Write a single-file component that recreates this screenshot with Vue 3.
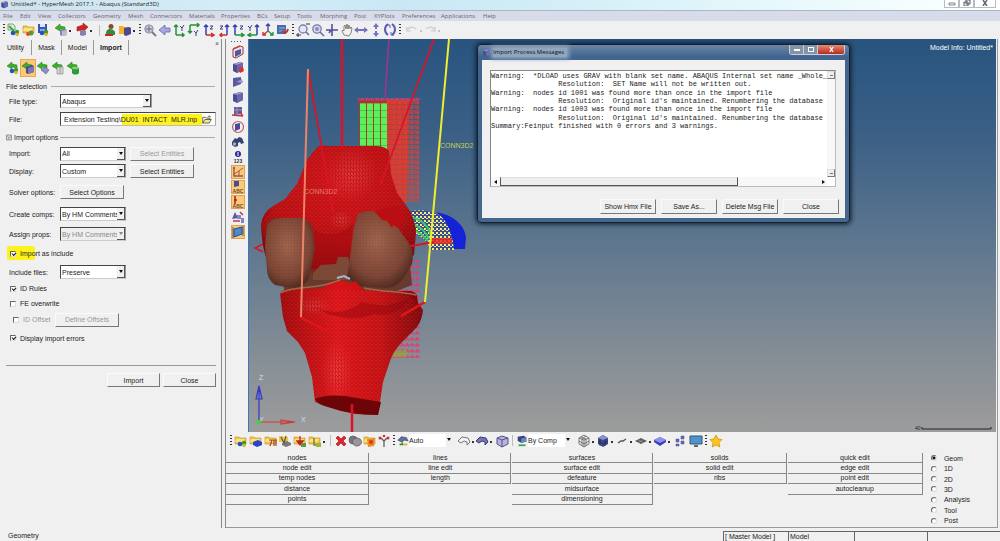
<script setup>
import { ref } from 'vue'

const menus = [
  ['File', 17], ['Edit', 18], ['View', 20], ['Collectors', 35], ['Geometry', 35], ['Mesh', 22],
  ['Connectors', 39], ['Materials', 32], ['Properties', 36], ['BCs', 17], ['Setup', 23], ['Tools', 23],
  ['Morphing', 34], ['Post', 20], ['XYPlots', 28], ['Preferences', 39], ['Applications', 42], ['Help', 20],
]

const folder = '<path d="M1 3h4l1 1h6v6H1z" fill="#f3c544" stroke="#c8922a" stroke-width=".6"/><path d="M2 5h9l-2 3H1z" fill="#fbe08a"/>'
const cube = '<path d="M2 4l7-2 3 1v7l-6 3-4-2z" fill="#4c4a90"/><path d="M2 4l7-2 3 1-6 2z" fill="#9a98cc"/><path d="M6 5l6-2v7l-6 3z" fill="#6a69ad"/>'
const arrowL = '<path d="M1 5l5-4v2l5 1v3L6 6v2z" fill="#3cae2c" stroke="#1e7d17" stroke-width=".5"/>'
const dots3 = '<circle cx="6" cy="10" r="2.3" fill="#2352c4"/><circle cx="10" cy="9" r="2.2" fill="#3b9a2e"/><circle cx="10" cy="11.500" r="1.700" fill="#d9b321"/>'
const axis = (d) => `<g fill="none" stroke="#24943c" stroke-width="1.500"><path d="${d}"/></g>`
const icons = {
  newModel: '<path d="M1 1h5l2 2v4H1z" fill="#dfe9f4" stroke="#5a9a48" stroke-width=".8"/><path d="M2 3l5 5" stroke="#3cae2c" stroke-width="2"/>' + dots3,
  open: folder + '<circle cx="9" cy="10" r="2.500" fill="#4aa13a"/><circle cx="6" cy="11" r="2" fill="#d84b2b"/>',
  save: '<path d="M2 1h9v9H2z" fill="#3b55b5"/><path d="M4 1h5v3H4z" fill="#dce4f6"/><path d="M4 6h5v4H4z" fill="#8ea5df"/>' + dots3,
  imp: arrowL + '<path d="M6 7l5-1 2 1v5l-5 1-2-1z" fill="#8583ae"/><path d="M8 8l5-1v5l-5 1z" fill="#bdbcc9"/>',
  exp: '<path d="M13 4L8 0v2L2 4v4l6-1v2z" fill="#cf2424" stroke="#8a1010" stroke-width=".5"/><path d="M5 8l4-1 2 1v4l-4 1-2-1z" fill="#8583ae"/>',
  user: '<circle cx="8" cy="3.500" r="2.500" fill="#8c4a28"/><path d="M3 11c0-4 2-5 4-5s4 1 5 3v3z" fill="#2f8c3d"/><path d="M2 11h8v2H2z" fill="#c12f24"/>',
  book: '<path d="M1 3h4l1 1h6v7H1z" fill="#f3b12c"/><path d="M6 5l5-1 2 1v6l-5 2-2-1z" fill="#4b4990"/>',
  mag: '<circle cx="6" cy="6" r="4" fill="#c7ccd9" stroke="#8a8da0" stroke-width="1.200"/><path d="M9 9l4 4" stroke="#777a8c" stroke-width="2"/><path d="M6 3v6M3 6h6" stroke="#686b84"/>',
  back: '<path d="M1 7l6-5v3h5v4H7v3z" fill="#a6a7dc" stroke="#6668a8" stroke-width=".8"/>',
  ax1: axis('M3 12V2M1 4l2-2 2 2M3 12h8M9 10l2 2-2 2') + '<path d="M7 3l2 2 2-3M9 5v3" stroke="#33408c" fill="none"/>',
  ax2: axis('M3 2h9M10 0l2 2-2 2M3 2v8M1 8l2 2 2-2') + '<path d="M7 8l2 2 2-3M9 10v3" stroke="#33408c" fill="none"/>',
  ax3: '<path d="M4 12V2M2 4l2-2 2 2" fill="none" stroke="#3340b0" stroke-width="1.500"/><path d="M4 12h7M9 10l3 2-3 2" fill="none" stroke="#cc2c2c" stroke-width="1.500"/><path d="M8 3h3L8 6h3" stroke="#33408c" fill="none"/>',
  ax4: '<path d="M10 12V2M8 4l2-2 2 2" fill="none" stroke="#3340b0" stroke-width="1.500"/><path d="M10 12H3M5 10l-2 2 2 2" fill="none" stroke="#cc2c2c" stroke-width="1.500"/><path d="M3 3h3L3 6h3" stroke="#33408c" fill="none"/>',
  ax5: '<path d="M3 12V2M1 4l2-2 2 2" fill="none" stroke="#3340b0" stroke-width="1.500"/><path d="M3 12h8M9 10l3 2-3 2" fill="none" stroke="#24943c" stroke-width="1.500"/><path d="M8 3h3L8 6h3" stroke="#33408c" fill="none"/>',
  ax6: '<path d="M11 12V2M9 4l2-2 2 2" fill="none" stroke="#3340b0" stroke-width="1.500"/><path d="M11 12H3M5 10l-3 2 3 2" fill="none" stroke="#24943c" stroke-width="1.500"/><path d="M2 3l2 2 2-3M4 5v3" stroke="#33408c" fill="none"/>',
  iso: '<path d="M7 8V1M5 3l2-2 2 2" fill="none" stroke="#3340b0" stroke-width="1.300"/><path d="M7 8l-5 4M2 9v3h3" fill="none" stroke="#cc2c2c" stroke-width="1.300"/><path d="M7 8l5 4M12 9v3H9" fill="none" stroke="#24943c" stroke-width="1.300"/>',
  pick: '<path d="M1 2h9v9H1z" fill="#3f6fb2"/><path d="M3 5h6M3 8h5" stroke="#90b6e2"/><path d="M6 8c3 3 5 2 6-2" stroke="#d02a2a" stroke-width="2" fill="none"/>',
  zoomA: '<circle cx="7" cy="6" r="4" fill="#e3e6f5" stroke="#7a7cb2" stroke-width="1.300"/><path d="M10 9l3 3" stroke="#6a6c9c" stroke-width="1.600"/><path d="M0 12h5M10 1h4M2 10v4" stroke="#333"/>',
  zoomB: '<circle cx="6" cy="6" r="4.200" fill="#d4d8ec" stroke="#7a7cb2" stroke-width="1.300"/><circle cx="6" cy="6" r="2" fill="#8c90bd"/><path d="M9 9l4 4" stroke="#6a6c9c" stroke-width="1.600"/>',
  cross: '<path d="M7 1v12M1 7h12M4 10l2-3" stroke="#50529b" stroke-width="1.600" fill="none"/>',
  hand: '<path d="M4 12L2 8l1-1 1 1V3l1-1 1 4 1-5 1 5 1-4 1 4 1-2 1 1-1 5-2 3z" fill="#f5f2ec" stroke="#6c6866" stroke-width=".8"/>',
  lr: '<path d="M0 7l4-3v2h6V4l4 3-4 3V8H4v2z" fill="#7173bf"/>',
  ud: '<path d="M7 0l3 4H8v2H6V4H4zM7 14l3-4H8V8H6v2H4z" fill="#7173bf"/>',
  rot: '<path d="M5 1c-4 3-4 8 0 11M9 1c4 3 4 8 0 11" fill="none" stroke="#5b5db3" stroke-width="2"/><path d="M3 2h4v3M11 12H8V9" fill="none" stroke="#5b5db3"/>',
  undo: '<path d="M2 8c1-4 6-5 9-2M2 4v4h4" fill="none" stroke="#d3d3d6" stroke-width="1.600"/>',
  redo: '<path d="M12 8c-1-4-6-5-9-2M12 4v4H8" fill="none" stroke="#d3d3d6" stroke-width="1.600"/>',
  impModel: arrowL + dots3,
  impSolver: arrowL + '<path d="M5 6l6-2 2 1v6l-6 2-2-1z" fill="#4b4990"/><path d="M7 7l6-2v6l-6 2z" fill="#7a78b0"/>',
  impGeo: arrowL + '<path d="M5 9l4-3 4 3-3 4z" fill="#8f8fc4" stroke="#5d5d90" stroke-width=".6"/>',
  impSim: arrowL + '<path d="M6 6h6v7H6z" fill="#d5d5d5" stroke="#8c8c8c" stroke-width=".7"/><path d="M9 6v7" stroke="#9a9a9a"/>',
  impDb: arrowL + '<path d="M6 7v5c1 2 6 2 7 0V7z" fill="#2c9c35"/><ellipse cx="9.500" cy="7" rx="3.500" ry="1.300" fill="#7ed26c"/>',
  book2: '<path d="M2 4l7-3 3 1v7l-7 4-3-1z" fill="#e9e6ee" stroke="#9a3a3a" stroke-width="1"/><path d="M4 6l6-2v5l-6 3z" fill="#5755a0"/><path d="M2 4l7-3" stroke="#c54343" stroke-width="1.500"/>',
  cubeRed: cube + '<path d="M7 8l5-1 1 4-4 2z" fill="#d93131"/>',
  cubeFlag: '<path d="M2 3l8-1v7l-8 3z" fill="#5b5a9c"/><path d="M5 7l6-3 1 4z" fill="#9896cd"/>',
  cube,
  cubeLine: '<path d="M3 2l8 0v7l-8 1z" fill="#605ea2"/><path d="M1 10l11 1M8 6l4 5" stroke="#c52f3f" stroke-width="1.300"/><path d="M3 5h8M6 2v8" stroke="#b3a6ce" stroke-width=".7"/>',
  cubeCirc: '<path d="M4 4l5-1v6l-5 2z" fill="#4c4a90"/><circle cx="7" cy="7" r="5.500" fill="none" stroke="#b95c6c" stroke-width="1.200"/>',
  binoc: '<path d="M1 7l3-4 2 1 2-2 3 1 2 5-3 1-1-2-2 1v3l-3 1-3-2z" fill="#35446f"/><circle cx="3.500" cy="9" r="1.700" fill="#9aaad2"/>',
  info: '<circle cx="7" cy="4" r="3" fill="#27299c"/><path d="M7 2v4" stroke="#fff"/><text x="7" y="13" font-size="5" font-weight="700" text-anchor="middle" fill="#333" font-family="Liberation Sans, sans-serif">123</text>',
  ang: '<path d="M3 3v8h9" fill="none" stroke="#8d5b3a" stroke-width="1.300"/><path d="M2 10L12 3M8 6v5" stroke="#a4555b"/><circle cx="3" cy="3" r="1.200" fill="#706d91"/>',
  abc1: '<path d="M3 1l5 0v5l-5 1z" fill="#4c4a90"/><text x="7" y="13" font-size="5" font-weight="700" text-anchor="middle" fill="#704a2c" font-family="Liberation Sans, sans-serif">ABC</text>',
  abc2: '<path d="M4 1v8M3 5h3" stroke="#b51d1d" stroke-width="1.500"/><text x="7" y="13" font-size="5" font-weight="700" text-anchor="middle" fill="#704a2c" font-family="Liberation Sans, sans-serif">ABC</text>',
  shapes: '<path d="M1 9l3-7 3 6z" fill="#5957a3"/><path d="M6 5h4v4H6zM10 8h3v5h-3z" fill="#8684c0"/><path d="M2 11h7M9 2l3 3" stroke="#b53d49" stroke-width="1.500"/>',
  frame: '<path d="M3 4l8-2v7l-8 3z" fill="#4a8ad0" stroke="#2a4a86"/><path d="M2 2v11M12 1v10" stroke="#456"/>',
  fCol: folder + dots3,
  fComp: folder + '<path d="M4 8l5-2 4 2v3l-5 2-4-2z" fill="#2a45c8"/>',
  fMat: folder + '<path d="M5 6h8M6 12l2-6M10 12V6M12 12V6" stroke="#9b4a2b" stroke-width="1.200"/>',
  fProp: '<path d="M1 2h4l1 1h4v5H1z" fill="#f3c544"/><path d="M4 9l5-2 4 2v2l-5 2-4-2z" fill="#77777d"/><path d="M3 3l3 6M8 2L6 9" stroke="#555" stroke-width="1.200"/>',
  fLoad: folder + '<path d="M7 2v8M4 7l3 4 3-4z" stroke="#c22020" fill="#c22020" stroke-width="1.300"/><path d="M8 9h5v4H8z" fill="#5b9d37"/>',
  fSys: folder + '<path d="M6 4v7h6" stroke="#6c8c28" stroke-width="1.500" fill="none"/><path d="M8 9h5v4H8z" fill="#9ab548"/>',
  del: '<path d="M2 4l2-2 3 3 3-3 2 2-3 3 3 3-2 2-3-3-3 3-2-2 3-3z" fill="#e0262c" stroke="#a50e14" stroke-width=".6"/>',
  spheres: '<ellipse cx="5" cy="6" rx="4" ry="4" fill="#77777c" stroke="#55555a" stroke-width=".7"/><ellipse cx="9" cy="8" rx="4.500" ry="4" fill="#96969b" stroke="#55555a" stroke-width=".7"/>',
  orange: folder + '<path d="M4 5l8-1-1 8-6 1z" fill="#ef8a23"/><circle cx="8" cy="8" r="2" fill="#c5421b"/>',
  qmarks: '<path d="M7 13V7L4 4M7 7l3-3" stroke="#555" fill="none" stroke-width="1.200"/><circle cx="3" cy="4" r="1.500" fill="#cf3434"/><circle cx="11" cy="4" r="1.500" fill="#cf3434"/><circle cx="7" cy="2" r="1.300" fill="#cf3434"/>',
  surfA: '<path d="M1 6l4-4 6 1 2 4-4-1-4 2z" fill="#5e6f9d" stroke="#2d3a60" stroke-width=".6"/><path d="M3 11h4" stroke="#3c8c34" stroke-width="2"/><path d="M7 11h5" stroke="#d3b431" stroke-width="2"/><path d="M6 7v4" stroke="#444"/>',
  surfB: '<path d="M1 7l4-4 6 1 2 4-3 3 0-3-3-1-3 2z" fill="#f4f4f7" stroke="#73757f" stroke-width="1"/>',
  surfC: '<path d="M1 7l4-4 6 1 2 4-3 3 0-3-3-1-3 2z" fill="#7574bb" stroke="#3a3a6c" stroke-width="1"/>',
  box: '<path d="M2 4l5-2 6 2v6l-6 3-5-3z" fill="#b5b4da" stroke="#555390"/><path d="M2 4l5 2 6-2M7 6v7" fill="none" stroke="#555390"/>',
  compBox: '<path d="M2 2l7-1 3 2v5L6 9 2 7z" fill="#31457a"/><path d="M6 4l6-1v5L6 9z" fill="#6a83c2"/><path d="M3 11h8v2H3z" fill="#34a04c"/>',
  wire: '<path d="M2 4l5-3 5 3v6l-5 3-5-3zM2 4l5 2 5-2M7 6v7M2 7l5 3 5-3M4 3l5 2v7M9 2L5 5v7" fill="none" stroke="#5a5a60" stroke-width=".8"/>',
  solid: '<path d="M2 4l5-3 5 3v6l-5 3-5-3z" fill="#3e4887"/><path d="M2 4l5-3 5 3-5 2z" fill="#8791cc"/><path d="M2 7l5 3 5-3M4 5v7M9 5v7" stroke="#222a5a" stroke-width=".7" fill="none"/>',
  line: '<path d="M3 9l3-2 2 0 3-2" stroke="#555" stroke-width="1.500" fill="none"/>',
  plate: '<path d="M1 7l6-3 6 3-6 3z" fill="#555a55"/><path d="M4 6l6 3M10 5L4 9" stroke="#a6aba6" stroke-width=".6"/>',
  block: '<path d="M1 6l6-3 6 3v2l-6 4-6-4z" fill="#3640b8"/><path d="M1 6l6-3 6 3-6 3z" fill="#8c93ee"/>',
  tiles: '<path d="M3 5h3v3H3zM8 2h3v3H8zM3 10h3v2H3zM8 7h3v3H8z" fill="#6a6cb0" stroke="#4a4c90" stroke-width=".5"/>',
  monitor: '<path d="M1 2h12v8H1z" fill="#4b94cf" stroke="#3a5570"/><path d="M5 12h4" stroke="#666" stroke-width="2"/>',
  star: '<path d="M7 1l2 4 4 .5-3 3 .8 4.500L7 11l-3.800 2L4 8.500l-3-3L5 5z" fill="#f9c51d" stroke="#d0940e" stroke-width=".8"/>',
}

const topBar = [
  { handle: true },
  { w: 43, items: ['newModel', 'open', 'save'] },
  { w: 46, items: ['imp', 'exp'], drop: true },
  { sep: true },
  { w: 14, items: ['user'] },
  { w: 20, items: ['book'], drop: true },
  { handle: true },
  { w: 147, items: ['mag', 'back', 'ax1', 'ax2', 'ax3', 'ax4', 'ax5', 'ax6', 'iso', 'pick'] },
  { handle: true },
  { w: 101, items: ['zoomA', 'zoomB', 'cross', 'hand', 'lr', 'ud', 'rot'] },
  { handle: true },
  { w: 40, items: ['undo', 'redo'], drop: true, dim: true },
]
const leftTools = ['book2', 'cubeRed', 'cubeFlag', 'cube', 'cubeLine', 'cubeCirc', 'binoc', 'info', 'ang', 'abc1', 'abc2', 'shapes', 'frame']
const activeTools = ['ang', 'abc1', 'abc2', 'frame']
const importKinds = ['impModel', 'impSolver', 'impGeo', 'impSim', 'impDb']
const bottomBar = [
  { handle: true },
  { w: 73, items: ['fCol', 'fComp', 'fMat', 'fProp', 'fLoad'] },
  { w: 20, items: ['fSys'], drop: true },
  { sep: true },
  { w: 57, items: ['del', 'spheres', 'orange', 'qmarks'] },
  { handle: true },
  { select: 'Auto', icon: 'surfA' },
  { w: 40, items: ['surfB', 'surfC'], drop: true },
  { w: 14, items: ['box'] },
  { sep: true },
  { select: 'By Comp', icon: 'compBox' },
  { w: 99, items: ['wire', 'solid', 'line', 'plate', 'block'], drop: true },
  { w: 30, items: ['tiles', 'monitor'] },
  { handle: true },
  { w: 14, items: ['star'] },
]
const columns = [
  ['nodes', 'node edit', 'temp nodes', 'distance', 'points'],
  ['lines', 'line edit', 'length'],
  ['surfaces', 'surface edit', 'defeature', 'midsurface', 'dimensioning'],
  ['solids', 'solid edit', 'ribs'],
  ['quick edit', 'edge edit', 'point edit', 'autocleanup'],
]
const pages = ['Geom', '1D', '2D', '3D', 'Analysis', 'Tool', 'Post']
const page = ref('Geom')
const filePath = ref('Extension Testing\\DU01_INTACT_MLR.inp')
const asInclude = ref(true)
const idRules = ref(true)
const feOverwrite = ref(false)
const showErrors = ref(true)
const messages = [
  'Warning:  *DLOAD uses GRAV with blank set name. ABAQUS Internal set name _Whole_',
  '                Resolution:  SET Name will not be written out.',
  'Warning:  nodes id 1001 was found more than once in the import file',
  '                Resolution:  Original id\'s maintained. Renumbering the database',
  'Warning:  nodes id 1003 was found more than once in the import file',
  '                Resolution:  Original id\'s maintained. Renumbering the database',
  'Summary:Feinput finished with 0 errors and 3 warnings.',
]
</script>

<template>
  <div class="app">
    <header class="titlebar">
      <svg class="logo" viewBox="0 0 14 14" v-html="icons.cube"></svg>
      <h1>Untitled* - HyperMesh 2017.1 - Abaqus (Standard3D)</h1>
      <div class="winbtns">
        <button aria-label="Minimize"><svg viewBox="0 0 8 6"><path d="M1 3h6v2H1z" fill="#fff" stroke="#667" stroke-width=".8" /></svg></button>
        <button aria-label="Restore"><svg viewBox="0 0 8 6"><path d="M3 0h4v4H3zM1 2h4v4H1z" fill="#fff" stroke="#556" /></svg></button>
        <button class="wide" aria-label="Close window"><svg viewBox="0 0 8 6"><path d="M2 0l4 6M6 0L2 6" stroke="#667" stroke-width="1.500" /></svg></button>
      </div>
    </header>
    <nav class="menubar">
      <button v-for="m in menus" :key="m[0]" :style="{ width: m[1] + 'px' }">{{ m[0] }}</button>
    </nav>
    <div class="toolbar top">
      <template v-for="(g, i) in topBar" :key="i">
        <span v-if="g.handle" class="handle"></span>
        <span v-else-if="g.sep" class="sep"></span>
        <div v-else class="group" :class="{ drop: g.drop, dim: g.dim }" :style="{ width: g.w + 'px' }">
          <button v-for="n in g.items" :key="n" :aria-label="n"><svg viewBox="0 0 14 14" v-html="icons[n]"></svg></button>
        </div>
      </template>
    </div>

    <div class="work">
      <aside class="panel">
        <div class="tabs">
          <button>Utility</button><button>Mask</button><button>Model</button><button class="on">Import</button>
          <button class="x" aria-label="Close panel">×</button>
        </div>
        <div class="kinds">
          <button v-for="k in importKinds" :key="k" :class="{ on: k === 'impSolver' }" :aria-label="k"><svg viewBox="0 0 14 14" v-html="icons[k]"></svg></button>
        </div>
        <h2><span>File selection</span></h2>
        <div class="row">
          <label for="ftype">File type:</label>
          <span class="sel w92"><select id="ftype"><option>Abaqus</option></select></span>
        </div>
        <div class="row">
          <label for="fpath">File:</label>
          <span class="file"><input id="fpath" v-model="filePath" type="text" />
            <button aria-label="Browse"><svg viewBox="0 0 14 12"><path d="M1 3h4l1 1h5v2M1 3v8l3-5h9l-3 5H1" fill="#f3e98a" stroke="#333" /><path d="M8 2l3-1 1 2" fill="none" stroke="#333" /></svg></button>
          </span>
        </div>
        <h2 class="opts"><svg viewBox="0 0 10 10"><path d="M1 1h8v8H1zM3 3l2 2 2-2M3 5l2 2 2-2" fill="none" stroke="#444" /></svg><span>Import options</span></h2>
        <div class="row tight">
          <label for="imp">Import:</label>
          <span class="sel w66"><select id="imp"><option>All</option></select></span>
          <button class="btn w64" disabled>Select Entities</button>
        </div>
        <div class="row">
          <label for="disp">Display:</label>
          <span class="sel w66"><select id="disp"><option>Custom</option></select></span>
          <button class="btn w64">Select Entities</button>
        </div>
        <div class="row solver"><span class="lbl">Solver options:</span><button class="btn w64">Select Options</button></div>
        <div class="row tall">
          <label for="comps">Create comps:</label>
          <span class="sel w66"><select id="comps"><option>By HM Comments</option></select></span>
        </div>
        <div class="row tall">
          <label for="props">Assign props:</label>
          <span class="sel w66 off"><select id="props" disabled><option>By HM Comments</option></select></span>
        </div>
        <label class="check mark"><input v-model="asInclude" type="checkbox" />Import as include</label>
        <div class="row">
          <label for="inc">Include files:</label>
          <span class="sel w66"><select id="inc"><option>Preserve</option></select></span>
        </div>
        <label class="check"><input v-model="idRules" type="checkbox" />ID Rules</label>
        <label class="check"><input v-model="feOverwrite" type="checkbox" />FE overwrite</label>
        <div class="offset">
          <label class="check dim"><input type="checkbox" disabled />ID Offset</label>
          <button class="btn w64" disabled>Define Offsets</button>
        </div>
        <label class="check last"><input v-model="showErrors" type="checkbox" />Display import errors</label>
        <div class="actions"><button class="btn">Import</button><button class="btn">Close</button></div>
      </aside>

      <main>
        <div class="stage">
          <div class="side">
            <button v-for="t in leftTools" :key="t" :class="{ on: activeTools.includes(t) }" :aria-label="t"><svg viewBox="0 0 14 14" v-html="icons[t]"></svg></button>
          </div>
          <div class="view">
            <svg class="scene" viewBox="249 39 747 393" preserveAspectRatio="xMinYMin meet">
              <defs>
                <pattern id="tri" width="4" height="4" patternUnits="userSpaceOnUse"><path d="M0 0h4M0 0l2 4 2-4" fill="none" stroke="#ff6a60" stroke-width=".4" opacity=".3" /></pattern>
                <pattern id="triLight" width="3" height="4" patternUnits="userSpaceOnUse"><path d="M0 0l2 4M0 2h2" fill="none" stroke="#ffb0a8" stroke-width=".6" opacity=".5" /></pattern>
                <pattern id="quad" width="3" height="3" patternUnits="userSpaceOnUse"><path d="M0 0h3M0 0v3" fill="none" stroke="#3a1a10" stroke-width=".4" opacity=".3" /></pattern>
                <pattern id="arr" width="6" height="5" patternUnits="userSpaceOnUse"><path d="M0 1h6M0 3h5M5 2L3 3l2 1" fill="none" stroke="#f23a28" stroke-width="1" /></pattern>
                <pattern id="pink" width="5" height="6" patternUnits="userSpaceOnUse"><path d="M1 5l1-4 2 4M0 3h5" fill="none" stroke="#e8386a" stroke-width=".9" /></pattern>
                <pattern id="grn" width="7" height="7" patternUnits="userSpaceOnUse" x="359" y="103"><path d="M0 0h7v7H0z" fill="#5df05d" /><path d="M0 0v7" stroke="#b5251c" stroke-width="1.800" /><path d="M0 0h7" stroke="#2b8a2b" stroke-width=".8" /></pattern>
                <pattern id="chk" width="4" height="4" patternUnits="userSpaceOnUse"><path d="M0 0h4v4H0z" fill="#3a4a9a" /><path d="M0 0h2v2H0zM2 2h2v1H2z" fill="#f3ee70" /></pattern>
                <radialGradient id="fem" cx=".5" cy=".3" r=".75"><stop offset="0" stop-color="#cc1216" /><stop offset=".6" stop-color="#b40c10" /><stop offset="1" stop-color="#6f0508" /></radialGradient>
                <linearGradient id="tib" x1="0" x2="1" y1="0" y2="0"><stop offset="0" stop-color="#9a080b" /><stop offset=".4" stop-color="#d81317" /><stop offset=".7" stop-color="#c00f12" /><stop offset="1" stop-color="#780609" /></linearGradient>
                <radialGradient id="cond" cx=".45" cy=".4" r=".65"><stop offset="0" stop-color="#a1644e" /><stop offset=".7" stop-color="#7d4636" /><stop offset="1" stop-color="#4a271e" /></radialGradient>
                <radialGradient id="sheen"><stop offset="0" stop-color="#fff" /><stop offset="1" stop-color="#000" /></radialGradient>
                <mask id="glow"><path d="M249 39h200v393H249z" fill="#000" /><ellipse cx="352" cy="175" rx="26" ry="28" fill="url(#sheen)" /><ellipse cx="341" cy="220" rx="12" ry="10" fill="url(#sheen)" /><ellipse cx="337" cy="372" rx="16" ry="34" fill="url(#sheen)" /><ellipse cx="314" cy="306" rx="18" ry="10" fill="url(#sheen)" /></mask>
              </defs>
              <path d="M387 100h22l-2 102h-20z" fill="#e33424" opacity=".7" /><path d="M387 100h32v102h-32z" fill="url(#arr)" />
              <path d="M358 98h62v4h-62z" fill="url(#pink)" />
              <path d="M359 103h28v48h-28z" fill="url(#grn)" /><path d="M358 102h29" stroke="#e01d18" stroke-width="2" />
              <path d="M387 260h33v98h-33z" fill="url(#pink)" /><path d="M391 350h16v7h-16z" fill="#8fae29" opacity=".6" />
              <path d="M410 211c12-2 24 0 32 6 7 8 11 18 12 33h-24c-2-10-9-15-20-18z" fill="url(#chk)" />
              <path d="M436 212c17 3 28 12 30 25l-1 12h-11c-2-19-8-30-18-37z" fill="#1622d8" />
              <path d="M411 217c12 3 18 10 20 19M410 223c11 3 16 9 19 16M411 229c8 3 13 7 17 12" fill="none" stroke="#38c769" stroke-width="2" />
              <path d="M430 238h22v6h-22z" fill="#e92d21" opacity=".85" />
              <path d="M263 244l-8 4 8 4" stroke="#d51623" stroke-width="1.500" fill="none" />
              <path d="M280 270l20-8h90l20 3 2 20-20 8H285z" fill="#68392d" />
              <path d="M317 147Q320 145 330 146L378 146Q386 147 389 151L391 174 397 193 408 208Q415 219 416 232L414 255 402 265 358 276 343 268 325 269 270 267Q262 252 261 225 262 213 273 206L285 199 297 184 307 160Z" fill="url(#fem)" />
              <path d="M317 147L378 146 389 151 391 174 397 193 408 208 416 232 414 255 358 276 343 268 270 267 261 225 273 206 285 199 297 184 307 160Z" fill="url(#tri)" />
              <path d="M314 230q22 11 39-6l-5 50-9-6-28 6z" fill="#9d090d" opacity=".5" />
              <path d="M313 273l8-8 15-1 2-7h10l3 11-4 12h-34z" fill="#7d4937" />
              <path d="M267 224Q272 217 284 218L303 218Q312 222 313 231L315 248 312 264 308 280Q302 288 292 288L275 285Q267 279 267 270L265 247Z" fill="url(#cond)" />
              <path d="M267 224Q272 217 284 218L303 218Q312 222 313 231L315 248 312 264 308 280Q302 288 292 288L275 285Q267 279 267 270L265 247Z" fill="url(#quad)" />
              <path d="M358 214Q367 209 377 212L388 221 398 228 411 246Q414 255 412 264L402 280Q395 288 385 288L358 286 347 277 350 257 354 227Z" fill="url(#cond)" />
              <path d="M358 214Q367 209 377 212L388 221 398 228 411 246Q414 255 412 264L402 280Q395 288 385 288L358 286 347 277 350 257 354 227Z" fill="url(#quad)" />
              <path d="M374 211l23-6 8 13-5 10-7-3-1 3-5-7-5-1z" fill="#b90f13" />
              <path d="M280 293Q283 288 300 289L322 288 328 283 340 280 350 283 355 281 364 290 402 291Q416 290 417 296L418 303 423 310Q422 320 417 327L402 342Q394 350 390 361L383 382 378 415 355 414 328 407 315 402 312 377 305 353 298 342 287 331 283 317Z" fill="url(#tib)" />
              <path d="M280 293Q283 288 300 289L364 290 402 291 418 303 423 310 417 327 402 342 390 361 383 382 378 415 328 407 315 402 312 377 305 353 298 342 287 331 283 317Z" fill="url(#tri)" />
              <path d="M310 304q28 17 52-2 25 8 48-4-12 20-35 16-35 12-65-10z" fill="#8a060a" opacity=".4" />
              <path d="M280 140h130v270H280z" fill="url(#triLight)" mask="url(#glow)" />
              <path d="M280 293c12-7 30-4 48-9l12-4M364 288c18 4 38 3 52 7" fill="none" stroke="#9b6a4a" stroke-width="1.500" />
              <path d="M337 278l7-2 6 3" stroke="#a6b6d0" stroke-width="2" fill="none" />
              <path d="M315 399Q325 394 345 396L381 402 378 415Q350 415 328 407 317 404 315 399Z" fill="#6d0508" />
              <path d="M342 39v108M352 404v28" stroke="#d9142a" stroke-width="2.500" />
              <path d="M308 69l25 143M434 39l-54 147M411 246l23-4" stroke="#d9142a" stroke-width="1.800" />
              <path d="M300 317l27 14M425 302l-24 14" stroke="#e3151b" stroke-width="2.500" />
              <path d="M389 39l-4 58" stroke="#a53290" stroke-width="1.500" />
              <path d="M308 69l-7 248" stroke="#ee8467" stroke-width="2" />
              <path d="M449 39l-24 263" stroke="#f0ee2e" stroke-width="2" />
              <g font-family="Liberation Sans, sans-serif" font-size="7">
                <text x="440" y="148" fill="#c5cf4e">CONN3D2</text>
                <text x="304" y="194" fill="#e07c70">CONN3D2</text>
                <text x="259" y="380" fill="#dde">Z</text><text x="301" y="422" fill="#dde">X</text><text x="259" y="422" fill="#dde">Y</text>
                <text x="915" y="430" fill="#222" font-size="5">40</text>
              </g>
              <path d="M259 422v-36M256 399l3-13 3 13z" stroke="#3039c9" stroke-width="1.200" fill="none" />
              <path d="M259 422h36M281 420l14 2-14 2z" stroke="#d23a3a" stroke-width="1.200" fill="none" />
              <path d="M257 420h4v4h-4z" fill="#35d545" />
              <path d="M922 427v2h69v-2" stroke="#222" fill="none" />
            </svg>
            <span class="info">Model Info: Untitled*</span>
            <section class="dialog" role="dialog" aria-label="Import Process Messages">
              <header>
                <svg class="logo" viewBox="0 0 14 14" v-html="icons.cube"></svg>
                <h3>Import Process Messages</h3>
                <div class="dbtns">
                  <button aria-label="Minimize dialog"><i class="min"></i></button>
                  <button aria-label="Maximize dialog"><i class="max"></i></button>
                  <button class="red" aria-label="Close dialog"><svg viewBox="0 0 8 6"><path d="M2 0l4 6M6 0L2 6" stroke="#fff" stroke-width="1.500" /></svg></button>
                </div>
              </header>
              <div class="body">
                <div class="log">
                  <div class="lines"><pre v-for="(l, i) in messages" :key="i">{{ l }}</pre></div>
                  <div class="vbar"><button aria-label="Scroll up"></button><button aria-label="Scroll down"></button></div>
                  <div class="hbar"><i class="la"></i><b></b><i class="ra"></i></div>
                </div>
                <div class="foot">
                  <button class="btn">Show Hmx File</button><button class="btn">Save As...</button><button class="btn">Delete Msg File</button><button class="btn">Close</button>
                </div>
              </div>
            </section>
          </div>
        </div>
        <div class="toolbar bottom">
          <template v-for="(g, i) in bottomBar" :key="i">
            <span v-if="g.handle" class="handle"></span>
            <span v-else-if="g.sep" class="sep"></span>
            <label v-else-if="g.select" class="pick"><svg viewBox="0 0 14 14" v-html="icons[g.icon]"></svg><select :aria-label="g.select"><option>{{ g.select }}</option></select></label>
            <div v-else class="group" :class="{ drop: g.drop }" :style="{ width: g.w + 'px' }">
              <button v-for="n in g.items" :key="n" :aria-label="n"><svg viewBox="0 0 14 14" v-html="icons[n]"></svg></button>
            </div>
          </template>
        </div>
        <div class="cmds">
          <div v-for="(c, i) in columns" :key="i" class="col"><button v-for="b in c" :key="b">{{ b }}</button></div>
          <div class="pages">
            <label v-for="p in pages" :key="p"><input v-model="page" type="radio" name="page" :value="p" />{{ p }}</label>
          </div>
        </div>
      </main>
    </div>
    <footer class="status"><span>Geometry</span><span class="cell">[ Master Model ]</span><span class="cell">Model</span><span class="cell"></span><span class="cell"></span></footer>
  </div>
</template>

<style>
html, body { margin: 0; background: #f0f0f0; }
</style>
<style scoped>
* { box-sizing: border-box; }
.app { height: 100vh; display: flex; flex-direction: column; overflow: hidden; background: #f0f0f0; color: #222; font: 7px/9px "Liberation Sans", Arial, sans-serif; }
button, input, select { font: inherit; color: inherit; margin: 0; padding: 0; border: 0; background: none; border-radius: 0; }
h1, h2, h3, pre { margin: 0; font: inherit; }
svg { display: block; }
.titlebar { height: 11px; flex: none; display: flex; align-items: flex-start; background: linear-gradient(90deg, #cfe2ee, #d4eef8 25%, #c9e7f5 40%, #d6f0f8 60%, #eefbfd 85%, #fff); border-bottom: 1px solid #aab7c4; font: 6px/9px "Open Sans", sans-serif; }
.titlebar h1 { flex: 1; padding-left: 2px; }
.logo { width: 9px; height: 9px; }
.winbtns { display: flex; margin-right: 4px; }
.winbtns button { width: 15px; height: 8px; border: 1px solid #b5bcc4; border-top: 0; background: #fff; display: flex; justify-content: center; }
.winbtns .wide { width: 22px; }
.winbtns svg { width: 8px; height: 6px; }
.menubar { height: 10px; flex: none; display: flex; padding-left: 3px; background: #d8dbea; font: 6px/9px "Open Sans", sans-serif; color: #666; }
.menubar button { text-align: left; white-space: nowrap; }
.toolbar { display: flex; align-items: center; flex: none; }
.toolbar svg { width: 14px; height: 14px; }
.toolbar.top { height: 18px; padding-left: 1px; }
.toolbar.bottom { height: 17px; padding-left: 2px; }
.handle { width: 2px; height: 12px; margin: 0 2px; background: repeating-linear-gradient(#333 0 1px, transparent 1px 3px); }
.sep { width: 1px; height: 11px; margin: 0 3px; background: #bbb; }
.group { display: flex; justify-content: space-between; }
.group button { width: 14px; position: relative; }
.group.drop { justify-content: space-around; padding-right: 4px; }
.group.drop button::after { content: ""; position: absolute; left: 15px; top: 7px; width: 2px; height: 2px; background: #333; }
.group.dim button::after { background: #c4c4c8; }
.pick { display: flex; align-items: center; width: 57px; margin-right: 1px; height: 13px; position: relative; }
.pick svg { width: 12px; height: 12px; }
.pick select { appearance: none; width: 37px; height: 13px; outline: 0; background: #fff; }
.pick::after, .sel::after { content: ""; position: absolute; right: 3px; top: 4px; border: 2px solid transparent; border-top: 3px solid #111; border-bottom: 0; }
.work { flex: 1; display: flex; min-height: 0; }
.panel { width: 226px; flex: none; border-right: 1px solid #888; padding: 0 4px 0 6px; position: relative; margin-bottom: 3px; }
.panel::after { content: ""; position: absolute; right: 3px; top: 0; bottom: 0; border-right: 1px solid #888; }
.tabs { display: flex; height: 16px; margin-top: 1px; }
.tabs button { padding: 0 6px; border-right: 1px solid #999; height: 15px; line-height: 15px; }
.tabs button:first-child { padding-left: 1px; padding-right: 7px; }
.tabs .on { font-weight: 700; }
.tabs button.x { border: 0; margin-left: auto; padding: 0 2px 0 0; line-height: 5px; height: 6px; color: #555; }
.kinds { display: flex; gap: 1px; margin-top: 4px; height: 16px; }
.kinds svg { width: 14px; height: 14px; }
.kinds .on { background: #fbc978; outline: 1px solid #e7a94b; }
h2 { display: flex; align-items: center; gap: 4px; height: 9px; margin: 6px 6px 1px 0; white-space: nowrap; }
h2::after { content: ""; height: 1px; flex: 1; background: #aaa; }
h2.opts { margin: 5px 6px 3px 0; gap: 2px; }
h2 svg { width: 6px; height: 7px; }
.row { display: flex; align-items: center; height: 18px; padding-left: 3px; }
.row.tight { height: 17px; }
.row.solver { height: 24px; }
.row.tall { height: 20px; }
.row label, .row .lbl { width: 51px; }
.sel { position: relative; display: flex; height: 14px; background: #fff; border: 1px solid #444; border-right-color: #999; border-bottom-color: #ccc; margin-right: 4px; }
.sel select { appearance: none; width: 100%; padding-left: 1px; outline: 0; white-space: nowrap; opacity: 1; }
.sel::before { content: ""; position: absolute; right: 0; top: 0; bottom: 0; width: 7px; background: #f0f0f0; border-right: 1px solid #555; border-bottom: 1px solid #555; }
.sel::after { right: 2px; }
.sel.off { background: #eee; color: #888; }
.sel.off::after { border-top-color: #888; }
.sel.w92 { width: 92px; }
.sel.w66 { width: 66px; }
.btn { height: 14px; text-align: center; border: 1px solid #fafafa; border-right-color: #777; border-bottom-color: #777; white-space: nowrap; background: #f0f0f0; }
.btn.w64 { width: 64px; }
.btn:disabled { color: #999; }
.file { display: flex; align-items: center; width: 156px; height: 14px; background: #fff; border: 1px solid #444; border-right-color: #aaa; border-bottom-color: #bbb; }
.file input { flex: 1; min-width: 0; height: 11px; padding-left: 3px; outline: 0; background: linear-gradient(#fdf21a, #fdf21a) 61px 0 / 80px 11px no-repeat; }
.file button { width: 13px; }
.file svg { width: 10px; height: 9px; }
.check { display: flex; align-items: center; gap: 4px; height: 15px; padding-left: 4px; }
.check input, .pages input { appearance: none; width: 6px; height: 6px; background: #fff; border: 1px solid #666; border-right-color: #ddd; border-bottom-color: #ddd; }
.check input:checked { position: relative; }
.check input:checked::after { content: ""; position: absolute; left: 1px; top: 0; width: 3px; height: 2px; border-left: 1px solid #111; border-bottom: 1px solid #111; transform: rotate(-45deg); }
.check.mark { height: 19px; background: radial-gradient(ellipse at center, #fdf21a 85%, transparent 100%) 1px 2px / 28px 14px no-repeat; }
.check.dim { color: #999; padding-left: 7px; width: 49px; }
.offset { display: flex; align-items: center; height: 17px; }
.check.last { height: 20px; }
.actions { display: flex; justify-content: flex-end; gap: 3px; border-top: 1px solid #999; margin: 17px 5px 0 0; padding-top: 7px; }
.actions .btn { width: 53px; }
main { flex: 1; min-width: 0; display: flex; flex-direction: column; margin: 0 2px 3px 0; border-right: 1px solid #999; border-bottom: 1px solid #999; }
.stage { flex: 1; display: flex; min-height: 0; }
.side { width: 23px; padding: 2px 0 0 5px; border-right: 1px solid #3c78b8; display: flex; flex-direction: column; align-items: flex-start; gap: 1px; flex: none; }
.side::before { content: ""; width: 12px; height: 1px; margin-bottom: 2px; background: repeating-linear-gradient(90deg, #555 0 1px, transparent 1px 3px); }
.side button { width: 14px; }
.side svg { width: 14px; height: 14px; }
.side .on { background: #fbc978; outline: 1px solid #dba35a; outline-offset: -1px; }
.view { flex: 1; position: relative; background: linear-gradient(#28547f, #3c6086 25%, #62798f 55%, #8b9197 85%, #9c9c9c); margin-right: 1px; overflow: hidden; }
.scene { position: absolute; inset: 0; width: 100%; height: 100%; }
.info { position: absolute; right: 3px; top: 4px; color: #fff; }
.dialog { position: absolute; left: 228px; top: 5px; width: 373px; border: 1px solid #16202c; border-radius: 4px; background: linear-gradient(#6b86a6, #3f6590 12px, #45678d); padding: 0 4px 4px; box-shadow: 0 0 5px 1px #0b1b2c; }
.dialog header { display: flex; height: 15px; align-items: center; font: 6px/9px "Open Sans", sans-serif; color: #111; }
.dialog h3 { margin-left: 2px; padding: 0 3px 0 0; background: #8fa6bf; box-shadow: 0 0 4px 2px #8fa6bf; }
.dbtns { display: flex; align-self: flex-start; margin-left: auto; border: 1px solid #ccd; border-top: 0; border-radius: 0 0 3px 3px; overflow: hidden; }
.dbtns button { width: 14px; height: 9px; background: #8394a8; border-right: 1px solid #ccd; display: flex; align-items: center; justify-content: center; }
.dbtns .red { width: 26px; border: 0; background: linear-gradient(#e28b78, #b82a1c); }
.dbtns svg { width: 7px; height: 5px; }
.dbtns .min { width: 6px; height: 2px; background: #fff; }
.dbtns .max { width: 6px; height: 5px; border: 1px solid #fff; }
.body { background: #f0f0f0; padding: 10px 6px 4px 8px; }
.log { display: grid; grid-template-columns: 1fr 8px; grid-template-rows: 106px 9px; background: #fff; border: 1px solid #bbb; border-top-color: #888; border-left-color: #888; margin-right: 3px; }
.lines { display: flex; flex-direction: column; justify-content: space-between; height: 60px; padding: 1px 0; min-width: 0; }
.lines pre { font: 7px/8px "Liberation Mono", monospace; color: #222; }
.vbar { display: flex; flex-direction: column; justify-content: space-between; background: #f8f8f8; }
.vbar button { height: 8px; background: #eee; border: 1px solid #ddd; border-right-color: #777; border-bottom-color: #777; display: flex; align-items: center; justify-content: center; }
.vbar button::after { content: ""; width: 3px; height: 1px; background: #777; }
.hbar { display: flex; align-items: center; justify-content: space-between; background: #f8f8f8; }
.hbar b { width: 238px; margin-right: auto; margin-left: 3px; height: 9px; background: #eee; border: 1px solid #555; border-top-color: #ddd; }
.hbar i { border: 2px solid transparent; }
.hbar .la { border-right: 3px solid #111; margin-left: 1px; }
.hbar .ra { border-left: 3px solid #111; }
.foot { display: flex; justify-content: flex-end; gap: 5px; padding-top: 12px; }
.foot .btn { width: 56px; height: 15px; }
.cmds { display: grid; grid-template-columns: 144fr 142fr 141fr 134fr 136fr 73fr; height: 78px; padding-top: 4px; }
.col { display: grid; grid-template-rows: repeat(5, 1fr); height: 52px; margin-right: 1px; }
.col button { border-bottom: 1px solid #888; border-right: 1px solid #888; text-align: center; line-height: 8px; }
.pages { display: grid; grid-template-rows: repeat(7, 1fr); height: 73px; padding-left: 7px; }
.pages label { display: flex; align-items: center; gap: 7px; }
.pages input { border-radius: 50%; }
.pages input:checked { background: radial-gradient(circle, #111 1px, #fff 2px); }
.status { height: 10px; flex: none; display: flex; }
.status span:first-child { flex: 1; padding-left: 8px; }
.cell { width: 73px; border-left: 1px solid #666; border-top: 1px solid #666; padding-left: 1px; }
.cell:nth-child(2) { width: 65px; }
.cell:nth-child(3) { width: 66px; }
</style>
